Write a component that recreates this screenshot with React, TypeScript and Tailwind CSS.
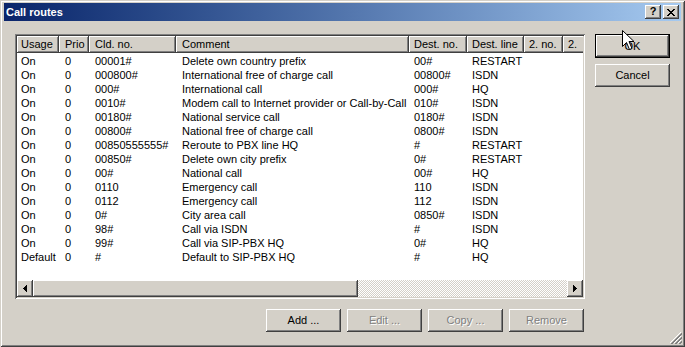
import React from "react";

const raised =
  "shadow-[inset_-1px_-1px_#404040,inset_1px_1px_#ffffff,inset_-2px_-2px_#808080,inset_2px_2px_#d4d0c8]";
const sunken =
  "shadow-[inset_1px_1px_#808080,inset_-1px_-1px_#ffffff,inset_2px_2px_#404040,inset_-2px_-2px_#d4d0c8]";

type Row = [string, string, string, string, string, string];
const rows: Row[] = [
  ["On", "0", "00001#", "Delete own country prefix", "00#", "RESTART"],
  ["On", "0", "000800#", "International free of charge call", "00800#", "ISDN"],
  ["On", "0", "000#", "International call", "000#", "HQ"],
  ["On", "0", "0010#", "Modem call to Internet provider or Call-by-Call", "010#", "ISDN"],
  ["On", "0", "00180#", "National service call", "0180#", "ISDN"],
  ["On", "0", "00800#", "National free of charge call", "0800#", "ISDN"],
  ["On", "0", "00850555555#", "Reroute to PBX line HQ", "#", "RESTART"],
  ["On", "0", "00850#", "Delete own city prefix", "0#", "RESTART"],
  ["On", "0", "00#", "National call", "00#", "HQ"],
  ["On", "0", "0110", "Emergency call", "110", "ISDN"],
  ["On", "0", "0112", "Emergency call", "112", "ISDN"],
  ["On", "0", "0#", "City area call", "0850#", "ISDN"],
  ["On", "0", "98#", "Call via ISDN", "#", "ISDN"],
  ["On", "0", "99#", "Call via SIP-PBX HQ", "0#", "HQ"],
  ["Default", "0", "#", "Default to SIP-PBX HQ", "#", "HQ"],
];

const cols = [
  { label: "Usage", w: "w-[42px]", pl: "pl-[4px]" },
  { label: "Prio", w: "w-[30px]", pl: "pl-[6px]" },
  { label: "Cld. no.", w: "w-[87px]", pl: "pl-[6px]" },
  { label: "Comment", w: "w-[233px]", pl: "pl-[6px]" },
  { label: "Dest. no.", w: "w-[58px]", pl: "pl-[5px]" },
  { label: "Dest. line", w: "w-[57px]", pl: "pl-[5px]" },
  { label: "2. no.", w: "w-[39px]", pl: "pl-[5px]" },
  { label: "2.", w: "w-[40px]", pl: "pl-[5px]" },
];

function Btn({ label, disabled }: { label: string; disabled?: boolean }) {
  return (
    <div
      className={`w-[75px] h-[23px] flex items-center justify-center bg-[#d4d0c8] ${raised} ${
        disabled ? "text-[#808080] [text-shadow:1px_1px_0_#ffffff]" : "text-black"
      }`}
    >
      {label}
    </div>
  );
}

export default function App() {
  return (
    <div className="w-[685px] h-[347px] bg-[#d4d0c8] relative overflow-hidden font-['Liberation_Sans',Arial,sans-serif] text-[11px] leading-none text-black shadow-[inset_1px_1px_#d4d0c8,inset_-1px_-1px_#404040,inset_2px_2px_#ffffff,inset_-2px_-2px_#808080] p-[4px] pt-[3px] flex flex-col">
      {/* Title bar */}
      <div className="h-[18px] bg-linear-to-r from-[#0a246a] to-[#a6caf0] flex items-center justify-between pl-[2px] pr-[2px]">
        <span className="text-white font-bold text-[11px] pl-[0px]">Call routes</span>
        <div className="flex gap-[2px]">
          <div className={`w-[16px] h-[14px] bg-[#d4d0c8] ${raised} flex items-center justify-center font-bold text-[11px] leading-none pb-[1px]`}>
            ?
          </div>
          <div className={`w-[16px] h-[14px] bg-[#d4d0c8] ${raised} flex items-center justify-center`}>
            <svg width="8" height="7" viewBox="0 0 8 7" shapeRendering="crispEdges">
              <path d="M0 0h2v1h-2zM6 0h2v1h-2zM1 1h2v1h-2zM5 1h2v1h-2zM2 2h4v1h-4zM3 3h2v1h-2zM2 4h4v1h-4zM1 5h2v1h-2zM5 5h2v1h-2zM0 6h2v1h-2zM6 6h2v1h-2z" fill="#000" />
            </svg>
          </div>
        </div>
      </div>

      {/* Body */}
      <div className="flex pt-[13px] pl-[11px]">
        <div className="flex flex-col w-[570px]">
          {/* List view */}
          <div className={`h-[265px] bg-white ${sunken} p-[2px] flex flex-col`}>
            <div className="flex-1 flex flex-col overflow-hidden">
              {/* Header */}
              <div className="flex h-[17px] shrink-0">
                {cols.map((c) => (
                  <div
                    key={c.label}
                    className={`${c.w} shrink-0 h-full bg-[#d4d0c8] shadow-[inset_-1px_-1px_#404040,inset_1px_1px_#ffffff,inset_-2px_-2px_#808080] flex items-center ${c.pl} whitespace-nowrap overflow-hidden`}
                  >
                    {c.label}
                  </div>
                ))}
              </div>
              {/* Rows */}
              <div className="flex-1 pt-[1px]">
                {rows.map((r, i) => (
                  <div key={i} className="flex h-[14px] items-center">
                    {r.map((cell, j) => (
                      <div
                        key={j}
                        className={`${cols[j].w} shrink-0 ${cols[j].pl} whitespace-nowrap overflow-hidden`}
                      >
                        {cell}
                      </div>
                    ))}
                  </div>
                ))}
              </div>
              {/* Horizontal scrollbar */}
              <div className="h-[17px] flex shrink-0">
                <div className={`w-[16px] h-full bg-[#d4d0c8] ${raised} flex items-center justify-center`}>
                  <svg width="4" height="7" viewBox="0 0 4 7" shapeRendering="crispEdges">
                    <path d="M3 0h1v7h-1zM2 1h1v5h-1zM1 2h1v3h-1zM0 3h1v1h-1z" fill="#000" />
                  </svg>
                </div>
                <div className={`w-[325px] h-full bg-[#d4d0c8] ${raised}`} />
                <div className="flex-1 h-full bg-[image:repeating-conic-gradient(#d4d0c8_0%_25%,#ffffff_0%_50%)] bg-[length:2px_2px]" />
                <div className={`w-[16px] h-full bg-[#d4d0c8] ${raised} flex items-center justify-center`}>
                  <svg width="4" height="7" viewBox="0 0 4 7" shapeRendering="crispEdges">
                    <path d="M0 0h1v7h-1zM1 1h1v5h-1zM2 2h1v3h-1zM3 3h1v1h-1z" fill="#000" />
                  </svg>
                </div>
              </div>
            </div>
          </div>
          {/* Bottom buttons */}
          <div className="flex justify-end gap-[6px] mt-[10px] pr-[1px]">
            <Btn label="Add ..." />
            <Btn label="Edit ..." disabled />
            <Btn label="Copy ..." disabled />
            <Btn label="Remove" disabled />
          </div>
        </div>

        {/* Right buttons */}
        <div className="flex flex-col gap-[6px] ml-[10px]">
          <div className="w-[75px] h-[24px] border border-black">
            <div className={`w-full h-full flex items-center justify-center bg-[#d4d0c8] ${raised}`}>OK</div>
          </div>
          <Btn label="Cancel" />
        </div>
      </div>

      {/* Size grip */}
      <svg className="absolute right-[3px] bottom-[3px]" width="12" height="12" viewBox="0 0 12 12" shapeRendering="crispEdges">
        <path d="M11 0L0 11M11 4L4 11M11 8L8 11" stroke="#ffffff" strokeWidth="1" />
        <path d="M12 1L1 12M12 2L2 12M12 5L5 12M12 6L6 12M12 9L9 12M12 10L10 12" stroke="#808080" strokeWidth="1" />
      </svg>

      {/* Mouse cursor */}
      <svg className="absolute left-[622px] top-[30px]" width="13" height="21" viewBox="0 0 13 21">
        <path d="M0.5 0.5 L0.5 16.5 L4.5 12.5 L7.5 19.5 L10 18.5 L7 11.5 L12 11.5 Z" fill="#ffffff" stroke="#000000" strokeWidth="1" />
      </svg>
    </div>
  );
}
